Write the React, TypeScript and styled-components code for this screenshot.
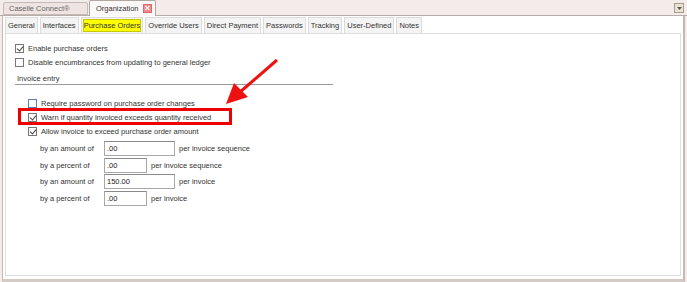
import React from 'react'
import styled, { createGlobalStyle } from 'styled-components'

const GlobalStyle = createGlobalStyle`
  html, body {
    margin: 0;
    padding: 0;
    background: #f4ecea;
  }
  body {
    font-family: "Liberation Sans", Arial, sans-serif;
    font-size: 7.5px;
    color: #333;
  }
`

const docTabs = [
  { label: 'Caselle Connect®', active: false },
  { label: 'Organization', active: true },
]

const pageTabs = [
  'General',
  'Interfaces',
  'Purchase Orders',
  'Override Users',
  'Direct Payment',
  'Passwords',
  'Tracking',
  'User-Defined',
  'Notes',
]

const amounts = [
  { label: 'by an amount of', value: '.00', wide: true, unit: 'per invoice sequence' },
  { label: 'by a percent of', value: '.00', wide: false, unit: 'per invoice sequence' },
  { label: 'by an amount of', value: '150.00', wide: true, unit: 'per invoice' },
  { label: 'by a percent of', value: '.00', wide: false, unit: 'per invoice' },
]

export default function App() {
  return (
    <>
      <GlobalStyle />
      <Window>
        <TopStrip>
          <DocTabs>
            {docTabs.map(t => (
              <DocTab key={t.label} active={t.active}>
                {t.label}
                {t.active && <CloseBox>×</CloseBox>}
              </DocTab>
            ))}
          </DocTabs>
          <MenuButton>
            <svg width="5" height="3" viewBox="0 0 5 3">
              <path d="M0 0 H5 L2.5 3 Z" fill="#555" />
            </svg>
          </MenuButton>
        </TopStrip>

        <Frame>
          <TabRow>
            {pageTabs.map(t => (
              <PageTab key={t}>
                <TabLabel highlight={t === 'Purchase Orders'}>{t}</TabLabel>
              </PageTab>
            ))}
          </TabRow>

          <Panel>
            <CheckRow>
              <Box checked />
              Enable purchase orders
            </CheckRow>
            <CheckRow>
              <Box />
              Disable encumbrances from updating to general ledger
            </CheckRow>

            <Section>
              <SectionTitle>Invoice entry</SectionTitle>
              <SubRows>
                <CheckRow>
                  <Box focus />
                  Require password on purchase order changes
                </CheckRow>
                <CheckRow>
                  <Box checked />
                  Warn if quantity invoiced exceeds quantity received
                </CheckRow>
                <CheckRow>
                  <Box checked />
                  Allow invoice to exceed purchase order amount
                </CheckRow>
                <AmountGrid>
                  {amounts.map((a, i) => (
                    <React.Fragment key={i}>
                      <AmountLabel>{a.label}</AmountLabel>
                      <AmountCell>
                        <Field wide={a.wide}>{a.value}</Field>
                        <span>{a.unit}</span>
                      </AmountCell>
                    </React.Fragment>
                  ))}
                </AmountGrid>
              </SubRows>
            </Section>

            {/* annotation overlays */}
            <Highlight />
            <Arrow width="60" height="50" viewBox="0 0 60 50">
              <line x1="55" y1="3" x2="18" y2="35" stroke="#ee1111" strokeWidth="3" />
              <path d="M4 47 L12 26 L26 40 Z" fill="#ee1111" />
            </Arrow>
          </Panel>
        </Frame>
      </Window>
    </>
  )
}

const Window = styled.div`
  width: 687px;
  height: 282px;
  display: flex;
  flex-direction: column;
  overflow: hidden;
`

const TopStrip = styled.div`
  height: 16px;
  display: flex;
  align-items: flex-end;
  justify-content: space-between;
  border-bottom: 1px solid #b6aca8;
  box-sizing: border-box;
  padding: 0 3px 0 3px;
`

const DocTabs = styled.div`
  display: flex;
  align-items: flex-end;
  gap: 1px;
`

const DocTab = styled.div<{ active?: boolean }>`
  display: flex;
  align-items: center;
  justify-content: space-between;
  height: ${p => (p.active ? 16 : 13)}px;
  margin-bottom: ${p => (p.active ? -1 : 0)}px;
  box-sizing: border-box;
  padding: 0 3px 0 ${p => (p.active ? 6 : 5)}px;
  width: ${p => (p.active ? 67 : 85)}px;
  background: ${p => (p.active ? '#fbf9f8' : '#efe4e1')};
  border: 1px solid ${p => (p.active ? '#b0a6a2' : '#c6bab6')};
  border-bottom: ${p => (p.active ? 'none' : '1px solid #c6bab6')};
  border-radius: 2px 2px 0 0;
  color: ${p => (p.active ? '#333' : '#666')};
  font-size: 7.5px;
`

const CloseBox = styled.span`
  width: 9px;
  height: 9px;
  box-sizing: border-box;
  background: #f08a8a;
  border: 1px solid #d86a6a;
  color: #fff;
  font-size: 9px;
  line-height: 6px;
  text-align: center;
  font-weight: bold;
`

const MenuButton = styled.div`
  width: 10px;
  height: 10px;
  margin-bottom: 2px;
  box-sizing: border-box;
  border: 1px solid #a89c8c;
  background: #ebe2d4;
  display: flex;
  align-items: center;
  justify-content: center;
`

const Frame = styled.div`
  flex: 1;
  margin: 0 2px 0 2px;
  background: #fff;
  border-left: 1px solid #c2b8b4;
  border-right: 2px solid #c2b8b4;
  border-bottom: 3px solid #d4cbc6;
  padding: 1px 2px 3px 2px;
  display: flex;
  flex-direction: column;
`

const TabRow = styled.div`
  display: flex;
  gap: 2px;
  height: 16px;
  align-items: stretch;
`

const PageTab = styled.div`
  display: flex;
  align-items: center;
  padding: 0 1px;
  background: #f4f4f4;
  border: 1px solid #dcdcdc;
  border-bottom: none;
  font-size: 7.5px;
  color: #333;
`

const TabLabel = styled.span<{ highlight?: boolean }>`
  padding: ${p => (p.highlight ? '1px 0' : '2px 1px')};
  background: ${p => (p.highlight ? '#ffff00' : 'transparent')};
  border: ${p => (p.highlight ? '1px solid #c8c800' : 'none')};
`

const Panel = styled.div`
  position: relative;
  flex: 1;
  border: 1px solid #dedede;
  padding: 7px 9px;
  display: flex;
  flex-direction: column;
`

const CheckRow = styled.label`
  display: flex;
  align-items: center;
  gap: 4px;
  height: 14px;
  font-size: 7.5px;
  color: #333;
`

const Box = styled.span<{ checked?: boolean; focus?: boolean }>`
  width: 9px;
  height: 9px;
  box-sizing: border-box;
  border: 1px solid ${p => (p.focus ? '#5a7fb8' : '#777')};
  background: #fff;
  position: relative;
  flex-shrink: 0;

  &::after {
    content: '';
    display: ${p => (p.checked ? 'block' : 'none')};
    position: absolute;
    left: 2px;
    top: 0px;
    width: 3px;
    height: 5px;
    border-right: 1px solid #444;
    border-bottom: 1px solid #444;
    transform: rotate(40deg);
  }
`

const Section = styled.div`
  margin-top: 5px;
  display: flex;
  flex-direction: column;
`

const SectionTitle = styled.div`
  width: 318px;
  padding: 0 0 1px 2px;
  border-bottom: 1px solid #9a9a9a;
  box-sizing: border-box;
  font-size: 7.5px;
  color: #333;
`

const SubRows = styled.div`
  padding: 11px 0 0 13px;
  display: flex;
  flex-direction: column;
`

const AmountGrid = styled.div`
  display: grid;
  grid-template-columns: 64px auto;
  grid-auto-rows: 16.7px;
  align-items: center;
  padding-left: 12px;
  margin-top: 2px;
`

const AmountLabel = styled.span`
  font-size: 7.5px;
`

const AmountCell = styled.div`
  display: flex;
  align-items: center;
  gap: 4px;
  font-size: 7.5px;
`

const Field = styled.div<{ wide?: boolean }>`
  width: ${p => (p.wide ? 71 : 43)}px;
  height: 15px;
  box-sizing: border-box;
  border: 1px solid #a8a8a8;
  border-top-color: #8a8a8a;
  padding: 0 2px;
  display: flex;
  align-items: center;
  font-size: 7.5px;
  color: #222;
  background: #fff;
`

const Highlight = styled.div`
  position: absolute;
  left: 12px;
  top: 74px;
  width: 214px;
  height: 17px;
  border: 3px solid #ee0000;
  box-sizing: border-box;
  pointer-events: none;
`

const Arrow = styled.svg`
  position: absolute;
  left: 216px;
  top: 23px;
  pointer-events: none;
`
